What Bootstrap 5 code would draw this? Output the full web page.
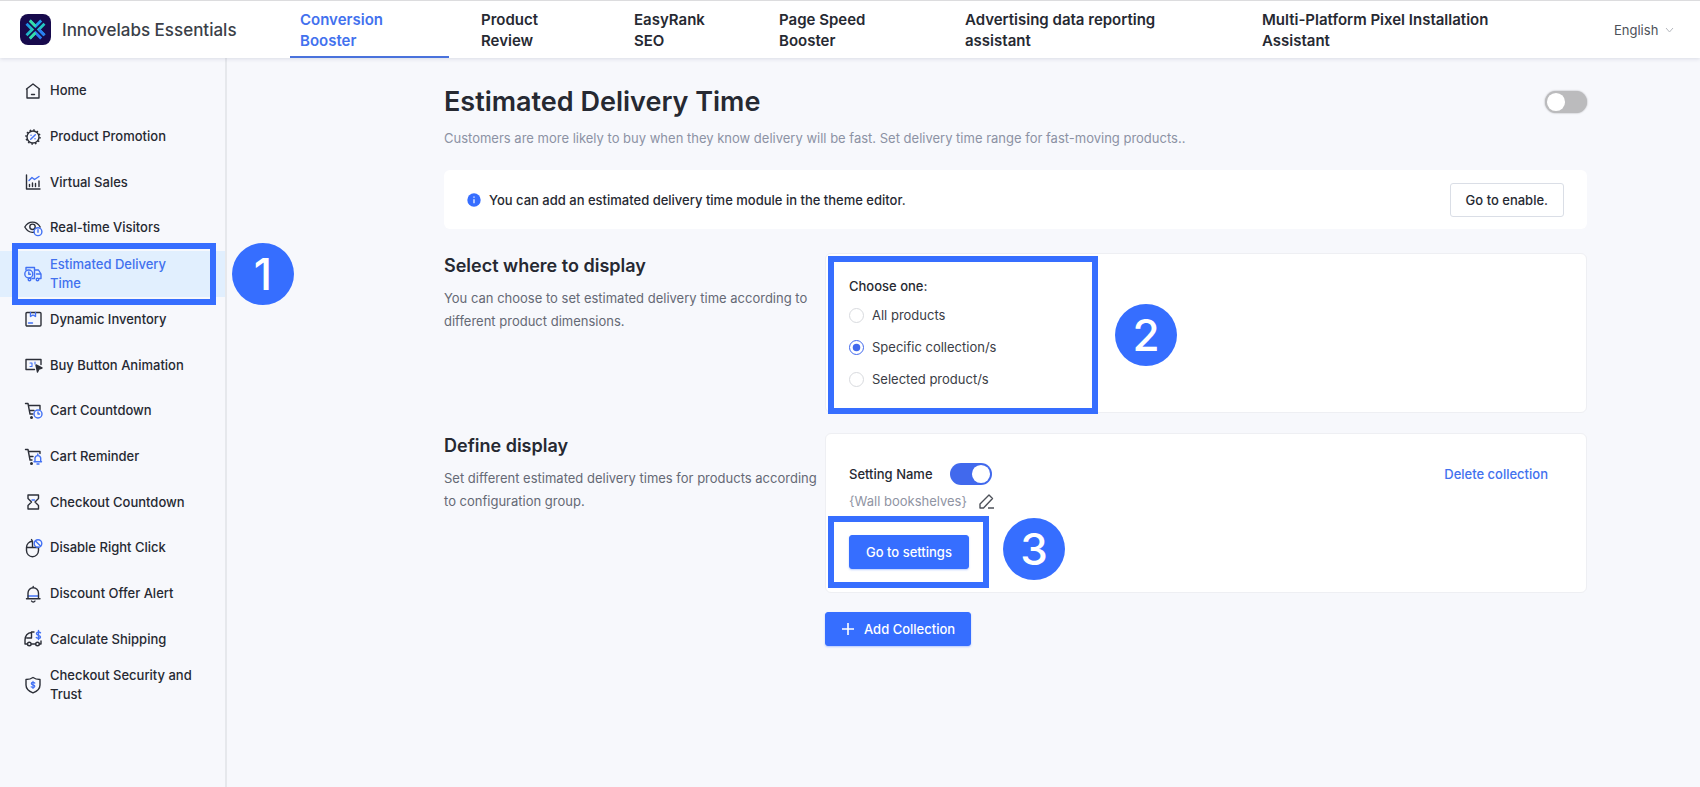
<!DOCTYPE html>
<html lang="en">
<head>
<meta charset="utf-8">
<meta name="viewport" content="width=device-width, initial-scale=1">
<title>Estimated Delivery Time</title>
<link href="https://cdn.jsdelivr.net/npm/bootstrap@5.3.0/dist/css/bootstrap.min.css" rel="stylesheet">
<style>
  :root { --brand: #366eff; --brand-text: #4271ee; --ink: #262932; --page: #f7f8fc; }
  body { font-family: Inter, "Liberation Sans", sans-serif; font-size: 13px; line-height: 20px; color: var(--ink); background: var(--page); }
  .topbar { height: 58px; background: #fff; border-top: 1px solid #dcdcde; box-shadow: 0 1px 4px rgba(40,50,90,.14); z-index: 2; }
  .brand-block { width: 290px; padding-left: 20px; gap: 11px; font-size: 17px; font-weight: 500; color: #3b3f48; }
  .app-tabs { display: grid; grid-template-columns: 181fr 153fr 145fr 186fr 297fr 362fr; }
  .app-tabs .nav-link { margin-right: 22px; padding: 8px 10px 5px; font-size: 15px; line-height: 21px; font-weight: 600; color: var(--ink); border-bottom: 2px solid transparent; }
  .app-tabs .nav-link.active { color: var(--brand-text); border-color: #4a72dc; }
  .lang-select { width: 60px; margin-right: 26px; padding: 0; border: 0; font-size: 13px; line-height: 20px; color: #4d5159; background-color: transparent; background-position: right center; background-size: 9px 9px;
    --bs-form-select-bg-img: url("data:image/svg+xml,%3csvg xmlns='http://www.w3.org/2000/svg' viewBox='0 0 9 9'%3e%3cpath d='M1 3l3.5 4L8 3' fill='none' stroke='%23b4b7bd'/%3e%3c/svg%3e"); }
  .sidebar { width: 227px; padding-top: 10px; border-right: 2px solid #e6e8ec; }
  .side-menu { display: grid; height: 640px; grid-auto-rows: 1fr; }
  .side-menu .nav-link { gap: 7px; padding: 0 30px 0 23px; font-weight: 500; line-height: 19px; color: var(--ink); }
  .side-menu .nav-link.active { color: var(--brand-text); background: #e1effe; }
  .side-menu svg { width: 20px; height: 20px; flex: none; overflow: visible; fill: none; stroke: #2c2f38; stroke-width: 1.4; stroke-linecap: round; stroke-linejoin: round; }
  .side-menu .hue { stroke: #4271f4; }
  .content-area { padding: 26px 113px 40px 217px; }
  h1 { font-size: 27px; line-height: 36px; font-weight: 600; }
  h2 { font-size: 18px; line-height: 24px; font-weight: 600; margin: 1px 0 9px; }
  .intro { margin: 8px 0 22px; color: #8c92a4; }
  .notice { min-height: 59px; padding: 0 23px; margin-bottom: 24px; background: #fff; border-radius: 6px; font-weight: 500; }
  .notice-icon { width: 14px; height: 14px; margin-right: 8px; }
  .note { line-height: 23px; color: #656975; margin: 0; }
  .panel { min-height: 160px; background: #fff; border: 1px solid #eeeff3; border-radius: 6px; padding: 22px 38px 12px 23px; }
  .section-row { margin-bottom: 20px; }
  .btn { --bs-btn-font-size: 13px; --bs-btn-line-height: 20px; --bs-btn-font-weight: 500; --bs-btn-border-radius: 3px; --bs-btn-padding-y: 6px; --bs-btn-padding-x: 15px; }
  .btn-primary { --bs-btn-bg: var(--brand); --bs-btn-border-color: var(--brand); box-shadow: 0 1px 2px rgba(54,110,255,.35); }
  .btn-plain { --bs-btn-color: var(--ink); --bs-btn-bg: #fff; --bs-btn-border-color: #dadee6; }
  .form-check-input.toggle { width: 42px; height: 22px; margin: 0; border: 0; background-color: #bbbbbd; border-radius: 11px;
    --bs-form-switch-bg: url("data:image/svg+xml,%3csvg xmlns='http://www.w3.org/2000/svg' viewBox='-4 -4 8 8'%3e%3ccircle r='3.3' fill='%23fff'/%3e%3c/svg%3e") !important; }
  .form-check-input.toggle:checked { background-color: #4169ed; }
  .toggle-ring { box-shadow: 0 0 2px rgba(0,0,0,.35); }
  .choose-title { font-size: 13px; line-height: 20px; font-weight: 500; padding-bottom: 3px; }
  .choice { height: 32px; gap: 8px; }
  .choice .form-check-input { width: 15px; height: 15px; margin: 0; border-color: #d8dade; }
  .choice .form-check-input:checked { background-color: #fff; border-color: #4169ed;
    --bs-form-check-bg-image: url("data:image/svg+xml,%3csvg xmlns='http://www.w3.org/2000/svg' viewBox='-4 -4 8 8'%3e%3ccircle r='2.3' fill='%234169ed'/%3e%3c/svg%3e"); }
  .choice label { color: #3a3d45; }
  .setting-line { gap: 17px; padding-top: 7px; font-weight: 500; }
  .group-name { margin: 6px 0 24px; gap: 11px; color: #8f94a3; }
  .group-name svg { width: 17px; height: 17px; fill: none; stroke: #4d5159; stroke-width: 1.4; stroke-linejoin: round; }
  .go-btn { --bs-btn-padding-x: 16px; }
  .add-btn { gap: 9px; margin-top: -1px; }
  .delete-link { color: var(--brand-text); }
  /* tutorial callouts laid over the page */
  .callout-frame { position: absolute; border: 6px solid var(--brand); pointer-events: none; z-index: 3; }
  .callout-num { position: absolute; width: 62px; height: 62px; border-radius: 50%; background: var(--brand); color: #fff; font-size: 44px; line-height: 62px; font-weight: 500; text-align: center; z-index: 3; }
  .frame-menu { left: 12px; right: 9px; top: -8px; bottom: -8px; }
  .num-menu { left: 232px; top: -8px; }
  .frame-choose { left: 2px; top: 2px; width: 270px; height: 158px; }
  .num-choose { left: 289px; top: 50px; }
  .frame-go { inset: -19px -20px -19px -21px; }
  .num-go { left: 154px; top: -17px; }
</style>
</head>
<body class="min-vh-100 d-flex flex-column">
<header class="topbar d-flex align-items-center position-relative">
  <div class="brand-block d-flex align-items-center">
    <svg width="31" height="31" viewBox="0 0 31 31" aria-hidden="true">
      <defs><linearGradient id="lg" x1="0" y1="0" x2="1" y2="1"><stop offset="0" stop-color="#1b86f2"/><stop offset="1" stop-color="#22e0a6"/></linearGradient></defs>
      <rect width="31" height="31" rx="8" fill="#170a4c"/>
      <g fill="none" stroke-width="2.800">
        <path d="M9.800 6.500 15.500 12.200 21.200 6.500" stroke="#1f9df0"/><path d="M9.800 6.500 15.500 12.200" stroke="#35dfa5"/>
        <path d="M9.800 24.500 15.500 18.800 21.200 24.500" stroke="#2a7df5"/><path d="M9.800 24.500 15.500 18.800" stroke="#35dfa5"/>
        <path d="M6.500 9.800 12.200 15.500 6.500 21.200" stroke="url(#lg)"/>
        <path d="M24.500 9.800 18.800 15.500 24.500 21.200" stroke="#25c9c4"/><path d="M18.800 15.500 24.500 21.200" stroke="#2a7df5"/>
      </g>
    </svg>
    <span>Innovelabs Essentials</span>
  </div>
  <nav class="app-tabs flex-grow-1 align-self-stretch" aria-label="Apps">
    <a class="nav-link active" href="#">Conversion<br>Booster</a>
    <a class="nav-link" href="#">Product<br>Review</a>
    <a class="nav-link" href="#">EasyRank<br>SEO</a>
    <a class="nav-link" href="#">Page Speed<br>Booster</a>
    <a class="nav-link" href="#">Advertising data reporting<br>assistant</a>
    <a class="nav-link" href="#">Multi-Platform Pixel Installation<br>Assistant</a>
  </nav>
  <select class="form-select lang-select" aria-label="Language"><option>English</option></select>
</header>

<div class="d-flex flex-grow-1">
  <aside class="sidebar flex-shrink-0">
    <nav class="side-menu" aria-label="Conversion Booster">
      <a class="nav-link d-flex align-items-center" href="#"><svg viewBox="0 0 20 20"><path d="M3.500 8 10 3l6.500 5M4 8v9h12V8M8.500 13.500h3"/></svg><span>Home</span></a>
      <a class="nav-link d-flex align-items-center" href="#"><svg viewBox="0 0 20 20"><circle cx="10" cy="10" r="6"/><circle cx="10" cy="10" r="7" stroke-dasharray="1.600 2.065" stroke-width="1.500" stroke-linecap="butt"/><path class="hue" d="M12.300 7.700 7.700 12.300M8 8.200h.1M12 11.800h.1"/></svg><span>Product Promotion</span></a>
      <a class="nav-link d-flex align-items-center" href="#"><svg viewBox="0 0 20 20"><path d="M3.500 3v14H17M6.500 14.500v-2M9.500 14.500V11M12.500 14.500v-3M16 14.500V9"/><path class="hue" d="m6 8.500 3-3 2.500 2L16 4.500"/></svg><span>Virtual Sales</span></a>
      <a class="nav-link d-flex align-items-center" href="#"><svg viewBox="0 0 20 20"><path d="M11 14.200C6.500 15 3.500 12 1.800 9 5.500 2.500 13.500 2.500 17.200 9"/><circle cx="9.500" cy="8.800" r="2.700"/><circle class="hue" cx="15" cy="13.700" r="3.900"/><path class="hue" d="M15 11.800v2.400"/></svg><span>Real-time Visitors</span></a>
      <div class="position-relative d-flex">
        <a class="nav-link active d-flex align-items-center w-100" href="#" aria-current="page"><svg viewBox="0 0 20 20"><g class="hue"><path d="M3 6V3.500h8.500v11H9M11.500 6h4l2.500 4v4.500h-1.500M13.500 10H18"/><circle cx="5.800" cy="10" r="4"/><path d="M5.800 8v2.200h1.700"/><circle cx="6.500" cy="15.500" r="1.300"/><circle cx="14.500" cy="15.500" r="1.300"/></g></svg><span>Estimated Delivery Time</span></a>
        <span class="callout-frame frame-menu"></span>
        <span class="callout-num num-menu">1</span>
      </div>
      <a class="nav-link d-flex align-items-center" href="#"><svg viewBox="0 0 20 20"><rect x="3" y="3.500" width="15" height="13.500" rx="1"/><path class="hue" d="M7.500 3.500v4l2.500-1.500 2.500 1.500v-4M5.500 14h4"/></svg><span>Dynamic Inventory</span></a>
      <a class="nav-link d-flex align-items-center" href="#"><svg viewBox="0 0 20 20"><path d="M11.500 14.500H3v-10h15v5"/><path class="hue" stroke-width="1.100" d="M7 8h2v3.500H7M12 7v2"/><path d="m13 10 1.500 7 1.500-3 3-1z" fill="#2c2f38"/></svg><span>Buy Button Animation</span></a>
      <a class="nav-link d-flex align-items-center" href="#"><svg viewBox="0 0 20 20"><path d="M2.500 2.500H5l2 10.500h3M5.500 4.500H17v4M6.500 9.500H11"/><circle cx="8.500" cy="16.500" r=".8" fill="#2c2f38"/><circle class="hue" cx="15" cy="13" r="4"/><path class="hue" d="M15 11v2h1.500"/></svg><span>Cart Countdown</span></a>
      <a class="nav-link d-flex align-items-center" href="#"><svg viewBox="0 0 20 20"><path d="M2.500 2.500H5l2 10.500h2M5.500 4.500H17v2M6.500 9.500H10"/><circle cx="8.500" cy="16.500" r=".8" fill="#2c2f38"/><path class="hue" d="M11 14.800h7.500M12 14.500V11a2.900 2.900 0 0 1 5.700 0v3.500M14 17h2M14.800 8V7"/></svg><span>Cart Reminder</span></a>
      <a class="nav-link d-flex align-items-center" href="#"><svg viewBox="0 0 20 20"><path d="M5 3h10.500v3.500L12 10l3.500 3.500V17H5v-3.500L8.500 10 5 6.500z"/><path class="hue" d="M9 8h2.500"/></svg><span>Checkout Countdown</span></a>
      <a class="nav-link d-flex align-items-center" href="#"><svg viewBox="0 0 20 20"><path d="M15.500 9.500v3a6 6.200 0 0 1-12 0v-3a6 6.200 0 0 1 6-6.200M3.500 9.500h12M9.500 9.500V3.300L8.500 1.500"/><circle class="hue" cx="15" cy="5.500" r="3.800"/><path class="hue" d="m12.500 3 5 5"/></svg><span>Disable Right Click</span></a>
      <a class="nav-link d-flex align-items-center" href="#"><svg viewBox="0 0 20 20"><path class="hue" d="M5 12h10.500"/><path d="M5 14V9a5.200 5.200 0 0 1 10.500 0v5M3.500 14.800H17M8.500 17a2 2 0 0 0 3.500 0M10.200 3.500v-1"/></svg><span>Discount Offer Alert</span></a>
      <a class="nav-link d-flex align-items-center" href="#"><svg viewBox="0 0 20 20"><path d="M11 3H8.500v6H3.800M8.500 3.500C4.500 3.500 2 7 2 11v4h2M8.500 15h4M16.500 15H18v-3"/><circle cx="6.300" cy="15" r="1.800"/><circle cx="14.500" cy="15" r="1.800"/><path class="hue" d="M17.500 3.800c-1.500-1.300-4-.8-4 .9 0 2 4 1.200 4 3.200 0 1.700-2.700 2-4.200.6M15.500 1.500v9"/></svg><span>Calculate Shipping</span></a>
      <a class="nav-link d-flex align-items-center" href="#"><svg viewBox="0 0 20 20"><path d="M10 2.500c2 1.500 4.500 2 7 2V10c0 4-3 6.300-7 7.800C6 16.300 3 14 3 10V4.500c2.500 0 5-.5 7-2z"/><path class="hue" stroke-width="1.200" d="M11.800 8c-1.200-1-3.500-.7-3.500.6 0 1.700 3.500 1 3.500 2.700 0 1.400-2.500 1.500-3.700.5M10 6.300v7.200"/></svg><span>Checkout Security and Trust</span></a>
    </nav>
  </aside>

  <main class="content-area flex-grow-1">
    <div class="d-flex align-items-center justify-content-between">
      <h1 class="m-0">Estimated Delivery Time</h1>
      <div class="form-switch p-0 d-flex"><input class="form-check-input toggle toggle-ring" type="checkbox" role="switch" aria-label="Enable estimated delivery time"></div>
    </div>
    <p class="intro">Customers are more likely to buy when they know delivery will be fast. Set delivery time range for fast-moving products..</p>

    <div class="notice d-flex align-items-center">
      <svg class="notice-icon" viewBox="0 0 14 14" aria-hidden="true"><circle cx="7" cy="7" r="6.700" fill="#366eff"/><path d="M7 6.200v4M7 3.500v1.300" stroke="#fff" stroke-width="1.200"/></svg>
      <span class="me-auto">You can add an estimated delivery time module in the theme editor.</span>
      <button class="btn btn-plain" type="button">Go to enable.</button>
    </div>

    <section class="row g-0 section-row">
      <div class="col-4">
        <h2>Select where to display</h2>
        <p class="note">You can choose to set estimated delivery time according to different product dimensions.</p>
      </div>
      <div class="col-8">
        <div class="panel position-relative">
          <fieldset>
            <legend class="choose-title m-0 float-none">Choose one:</legend>
            <div class="choice d-flex align-items-center"><input class="form-check-input" type="radio" name="scope" id="s1"><label for="s1">All products</label></div>
            <div class="choice d-flex align-items-center"><input class="form-check-input" type="radio" name="scope" id="s2" checked><label for="s2">Specific collection/s</label></div>
            <div class="choice d-flex align-items-center"><input class="form-check-input" type="radio" name="scope" id="s3"><label for="s3">Selected product/s</label></div>
          </fieldset>
          <span class="callout-frame frame-choose"></span>
          <span class="callout-num num-choose">2</span>
        </div>
      </div>
    </section>

    <section class="row g-0 section-row">
      <div class="col-4">
        <h2>Define display</h2>
        <p class="note">Set different estimated delivery times for products according to configuration group.</p>
      </div>
      <div class="col-8">
        <div class="panel">
          <div class="d-flex align-items-center setting-line">
            <label for="cfg">Setting Name</label>
            <div class="form-switch p-0 d-flex"><input class="form-check-input toggle" type="checkbox" role="switch" id="cfg" checked></div>
            <a class="delete-link text-decoration-none ms-auto" href="#">Delete collection</a>
          </div>
          <div class="group-name d-flex align-items-center"><span>{Wall bookshelves}</span>
            <svg viewBox="0 0 17 17" aria-hidden="true"><path d="M2 11 11 2l3.500 3.500L5.500 15H2zM10 15h6"/></svg>
          </div>
          <div class="position-relative d-inline-block">
            <button class="btn btn-primary go-btn" type="button">Go to settings</button>
            <span class="callout-frame frame-go"></span>
            <span class="callout-num num-go">3</span>
          </div>
        </div>
      </div>
    </section>

    <div class="row g-0">
      <div class="col-8 offset-4">
        <button class="btn btn-primary add-btn d-inline-flex align-items-center" type="button"><svg width="14" height="14" viewBox="0 0 14 14" aria-hidden="true"><path d="M7 1v12M1 7h12" stroke="#fff" stroke-width="1.600"/></svg>Add Collection</button>
      </div>
    </div>
  </main>
</div>
<script src="https://cdn.jsdelivr.net/npm/bootstrap@5.3.0/dist/js/bootstrap.bundle.min.js"></script>
</body>
</html>
